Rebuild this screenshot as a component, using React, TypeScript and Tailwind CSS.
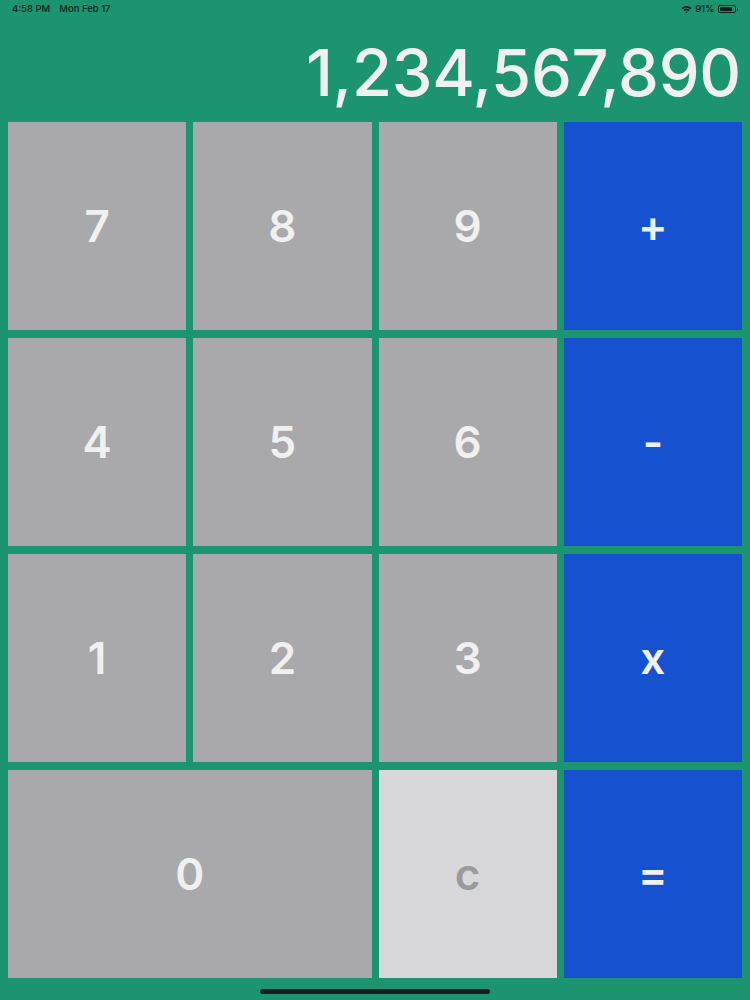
import React from "react";

const gray = "bg-[#a9a9ab] text-[#f0f0f0]";
const blue = "bg-[#1651d0] text-[#f0f0f0]";

function Btn({ label, cls, span }: { label: string; cls: string; span?: boolean }) {
  return (
    <div
      className={`${cls} ${span ? "col-span-2" : ""} flex items-center justify-center text-[44px] font-semibold`}
      style={{ fontFamily: "Inter, 'Liberation Sans', sans-serif" }}
    >
      {label}
    </div>
  );
}

export default function App() {
  return (
    <div className="w-[750px] h-[1000px] bg-[#1c946f] flex flex-col relative overflow-hidden" style={{ fontFamily: "Inter, 'Liberation Sans', sans-serif" }}>
      <div className="h-[18px] flex items-center justify-between px-[12px] text-[9.5px] font-medium text-[#0d1f18]">
        <div className="flex gap-[9px]">
          <span>4:58 PM</span>
          <span>Mon Feb 17</span>
        </div>
        <div className="flex items-center gap-[3px]">
          <svg width="11" height="9" viewBox="0 0 11 9">
            <path d="M0.5 3 A7 7 0 0 1 10.5 3 L9.3 4.3 A5.3 5.3 0 0 0 1.7 4.3 Z" fill="#0d1f18" />
            <path d="M2.5 5 A4.2 4.2 0 0 1 8.5 5 L7.3 6.2 A2.6 2.6 0 0 0 3.7 6.2 Z" fill="#0d1f18" />
            <path d="M4.5 7 A1.4 1.4 0 0 1 6.5 7 L5.5 8.3 Z" fill="#0d1f18" />
          </svg>
          <span>91%</span>
          <div className="flex items-center">
            <div className="w-[18px] h-[8px] rounded-[2px] border border-[#0d1f18] p-[1px]">
              <div className="w-[90%] h-full bg-[#0d1f18] rounded-[1px]" />
            </div>
            <div className="w-[1.5px] h-[3px] bg-[#0d1f18] ml-[1px] rounded-r" />
          </div>
        </div>
      </div>
      <div className="h-[104px] flex items-center justify-end pr-[9px] pt-[5px]">
        <span className="text-[65px] leading-none text-[#f0f0f0] font-medium tracking-[-0.3px]">1,234,567,890</span>
      </div>
      <div className="grid grid-cols-4 grid-rows-[repeat(4,208px)] gap-x-[7px] gap-y-[8px] pl-[8px] pr-[8px]">
        <Btn label="7" cls={gray} />
        <Btn label="8" cls={gray} />
        <Btn label="9" cls={gray} />
        <Btn label="+" cls={blue} />
        <Btn label="4" cls={gray} />
        <Btn label="5" cls={gray} />
        <Btn label="6" cls={gray} />
        <Btn label="-" cls={blue} />
        <Btn label="1" cls={gray} />
        <Btn label="2" cls={gray} />
        <Btn label="3" cls={gray} />
        <Btn label="x" cls={blue} />
        <Btn label="0" cls={gray} span />
        <Btn label="c" cls="bg-[#d8d7d9] text-[#9b9b9d]" />
        <Btn label="=" cls={blue} />
      </div>
      <div className="flex-1 flex items-end justify-center pb-[6px]">
        <div className="w-[230px] h-[5px] rounded-full bg-[#14201b]" />
      </div>
    </div>
  );
}
